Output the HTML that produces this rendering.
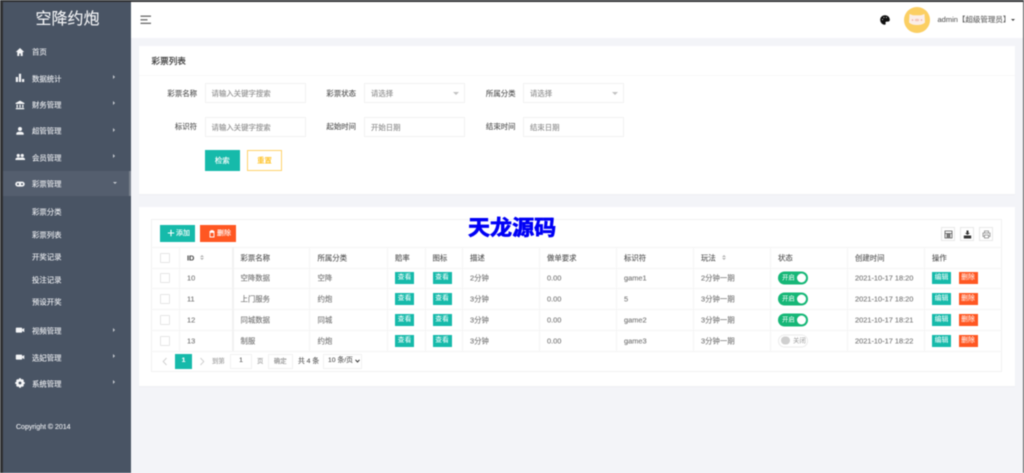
<!DOCTYPE html>
<html lang="zh"><head><meta charset="utf-8"><title>彩票列表</title>
<style>
*{box-sizing:border-box;margin:0;padding:0}
html,body{width:1024px;height:473px;overflow:hidden;background:#f3f4f8}
body{position:relative;font-family:"Liberation Sans","Noto Sans CJK SC",sans-serif;font-size:7.4px;color:#666}
.a{position:absolute;white-space:nowrap}
#page{position:absolute;left:0;top:0;width:1024px;height:473px;background:#f3f4f8;filter:blur(.4px);-webkit-text-stroke:.12px currentColor}
.side{position:absolute;left:3px;top:2px;width:128px;height:471px;background:#495464}
.m{position:absolute;left:32px;color:#e8eaee;line-height:12px;font-size:7.4px;transform:translateY(-5.5px)}
.ar{position:absolute;left:113px;width:0;height:0;border-left:2.5px solid #c5c9d0;border-top:2px solid transparent;border-bottom:2px solid transparent;transform:translateY(-2px)}
.ic{position:absolute;left:14px;width:10px;height:10px;transform:translateY(-5px)}
.card{position:absolute;left:139px;width:876px;background:#fff}
.lb{position:absolute;text-align:right;width:50px;color:#555;line-height:12px}
.ip{position:absolute;width:101px;height:20px;border:1px solid #f2f2f2;background:#fff;color:#8f8f8f;line-height:19px;padding-left:6px}
.tri{position:absolute;right:5px;top:8px;width:0;height:0;border-left:3px solid transparent;border-right:3px solid transparent;border-top:3.5px solid #c2c2c2}
.tb{position:absolute;left:151px;top:219px;width:851px;height:153px;border:1px solid #f2f2f2;background:#fff}
.hl{position:absolute;left:151px;width:851px;height:1px;background:#f4f4f4}
.vl{position:absolute;top:247px;width:1px;height:104px;background:#f4f4f4}
.t{position:absolute;line-height:12px;transform:translateY(-5.5px);color:#777}
.h{color:#555}
.cb{position:absolute;left:160px;width:10px;height:10px;border:1px solid #e6e6e6;background:#fff;border-radius:1px;transform:translateY(-5px)}
.b{position:absolute;width:19px;height:12px;line-height:12px;text-align:center;color:#fff;font-size:6.9px;background:#16baaa;transform:translateY(-6px);-webkit-text-stroke:0}
.r{background:#ff5722}
.sw{position:absolute;left:778px;width:30px;height:13px;border-radius:7px;background:#16b777;color:#fff;font-size:6.4px;line-height:13px;padding-left:4px;transform:translateY(-6.5px);-webkit-text-stroke:0}
.sw i{position:absolute;right:2px;top:2px;width:9px;height:9px;border-radius:50%;background:#fff}
.off{background:#fff;border:1px solid #ececec;color:#999;padding-left:14px;line-height:11px}
.off i{left:2px;right:auto;top:1px;background:#cfcfcf;width:8.5px;height:8.5px}
.sort{position:absolute;width:0;height:0;border-left:2.5px solid transparent;border-right:2.5px solid transparent}
.tool{position:absolute;top:227px;width:14px;height:14px;border:1px solid #e8e8e8;background:#fff}
</style></head><body><div id="page">
<div class="a" style="left:0;top:0;width:1024px;height:2px;background:#303133"></div>
<div class="a" style="left:0;top:0;width:3px;height:473px;background:#303133"></div>
<div class="a" style="left:1023px;top:0;width:1px;height:473px;background:#555"></div>

<div class="side"></div>
<div class="a" style="left:35.500px;top:8px;font-size:16px;line-height:24px;color:#f2f3f5">空降约炮</div>

<div class="a" style="left:3px;top:171px;width:128px;height:25px;background:#545e6e"></div>
<div class="a" style="left:129px;top:171px;width:2px;height:25px;background:#79818d"></div>

<svg class="ic" style="top:52px;left:14.500px" viewBox="0 0 10 10"><path d="M5 1 .8 5h1.500v4h2V6.500h1.400V9h2V5h1.500z" fill="#f4f5f7"/></svg>
<svg class="ic" style="top:78px;left:14.500px" viewBox="0 0 10 10"><path d="M.8 4h2.200v5H.8zM3.900 .8h2.200V9H3.900zM7 6h2.200v3H7z" fill="#f4f5f7"/></svg>
<svg class="ic" style="top:105px;left:14.500px" viewBox="0 0 10 10"><path d="M5 .6 .6 3v1h8.800V3zM1.500 4.600h1.300v3H1.500zM4.350 4.600h1.300v3H4.350zM7.200 4.600h1.300v3H7.200zM.8 8h8.400v1.300H.8z" fill="#f4f5f7"/></svg>
<svg class="ic" style="top:131px;left:14.500px" viewBox="0 0 10 10"><circle cx="5" cy="3" r="2" fill="#f4f5f7"/><path d="M1.300 8.800V7.200C2 6 3.500 5.800 5 5.800s3 .2 3.700 1.400v1.600z" fill="#f4f5f7"/></svg>
<svg class="ic" style="top:157px;left:14.500px;width:10.500px" viewBox="0 0 10 10"><circle cx="3" cy="3.500" r="1.600" fill="#f4f5f7"/><circle cx="7" cy="3.500" r="1.600" fill="#f4f5f7"/><path d="M.2 8V6.800C.8 5.700 2 5.500 3 5.500s2 .2 2 .2.9-.2 2-.2 2.200.2 2.800 1.300V8z" fill="#f4f5f7"/></svg>
<svg class="ic" style="top:183.500px;left:14.500px" viewBox="0 0 10 10"><rect x=".3" y="2.600" width="9.400" height="5" rx="2.500" fill="#f4f5f7"/><circle cx="3" cy="5.100" r="1" fill="#545e6e"/><circle cx="7" cy="5.100" r="1" fill="#545e6e"/></svg>
<svg class="ic" style="top:330px;left:14.500px" viewBox="0 0 10 10"><rect x=".8" y="2.600" width="6.400" height="5" rx=".8" fill="#f4f5f7"/><path d="M7.200 4.300 9.300 3.100v4L7.200 5.900z" fill="#f4f5f7"/></svg>
<svg class="ic" style="top:357px;left:14.500px" viewBox="0 0 10 10"><rect x=".8" y="2.600" width="6.400" height="5" rx=".8" fill="#f4f5f7"/><path d="M7.200 4.300 9.300 3.100v4L7.200 5.900z" fill="#f4f5f7"/></svg>
<svg class="ic" style="top:383px;left:14.500px" viewBox="0 0 10 10"><circle cx="5" cy="5" r="2.700" fill="none" stroke="#f4f5f7" stroke-width="2.600"/><path d="M4 .3h2v2H4zM4 7.700h2v2H4zM.3 4h2v2h-2zM7.700 4h2v2h-2zM1 2.500 2.500 1l1.200 1.200-1.500 1.500zM6.300 7.800l1.500-1.500L9 7.500 7.500 9zM1 7.500 2.500 9l1.200-1.200-1.500-1.500zM6.300 2.200l1.500 1.500L9 2.500 7.500 1z" fill="#f4f5f7"/></svg>

<div class="m" style="top:52px">首页</div>
<div class="m" style="top:78.500px">数据统计</div><div class="ar" style="top:77px"></div>
<div class="m" style="top:105px">财务管理</div><div class="ar" style="top:103px"></div>
<div class="m" style="top:131px">超管管理</div><div class="ar" style="top:129.500px"></div>
<div class="m" style="top:157.500px">会员管理</div><div class="ar" style="top:156px"></div>
<div class="m" style="top:183.500px">彩票管理</div>
<div class="a" style="left:112.500px;top:182px;border-top:2.500px solid #c5c9d0;border-left:2px solid transparent;border-right:2px solid transparent"></div>
<div class="m" style="top:212px">彩票分类</div>
<div class="m" style="top:234.500px">彩票列表</div>
<div class="m" style="top:257px">开奖记录</div>
<div class="m" style="top:280px">投注记录</div>
<div class="m" style="top:302px">预设开奖</div>
<div class="m" style="top:331px">视频管理</div><div class="ar" style="top:329.500px"></div>
<div class="m" style="top:357.500px">选妃管理</div><div class="ar" style="top:356px"></div>
<div class="m" style="top:383.500px">系统管理</div><div class="ar" style="top:382px"></div>
<div class="a" style="left:16px;top:422px;line-height:12px;color:#e4e6ea;font-size:7px">Copyright © 2014</div>

<!-- header -->
<div class="a" style="left:131px;top:2px;width:892px;height:36px;background:#fff"></div>
<svg class="a" style="left:140px;top:15px" width="12" height="10" viewBox="0 0 12 10"><path d="M.5 1.200h10.500M.5 4.800h7M.5 8.300h10.500" stroke="#555" stroke-width="1.100" fill="none"/></svg>
<svg class="a" style="left:880px;top:15px" width="10" height="10" viewBox="0 0 10 10"><path d="M5 .3C2.200.3.200 2.300.200 4.900S2.300 9.700 4.600 9.700c1 0 1.300-.7 1-1.400-.4-.9.100-1.700 1.100-1.700h1.500C9.200 6.600 9.800 5.800 9.800 4.800 9.800 2.200 7.600.3 5 .3z" fill="#111"/><circle cx="2.500" cy="4.600" r=".5" fill="#fff"/><circle cx="3.900" cy="2.500" r=".5" fill="#fff"/><circle cx="6.400" cy="2.500" r=".5" fill="#fff"/></svg>
<div class="a" style="left:904px;top:7px;width:26px;height:26px;border-radius:50%;background:#fbcf63"></div>
<svg class="a" style="left:908px;top:12px" width="18" height="14" viewBox="0 0 18 14"><path d="M1.500 2 5 3.200h8L16.500 2l.5 8.500C15 12.500 12 13 9 13s-6-.5-8-2.500z" fill="#fbeee8"/><ellipse cx="9" cy="8" rx="2.200" ry="1.300" fill="#f3c7bc"/><circle cx="4.500" cy="8" r=".8" fill="#eea89e"/><circle cx="13.500" cy="8" r=".8" fill="#eea89e"/></svg>
<div class="a" style="left:937.500px;top:14px;line-height:12px;color:#666;font-size:7.500px">admin【超级管理员】</div>
<div class="a" style="left:1011px;top:19px;border-top:2.500px solid #444;border-left:2px solid transparent;border-right:2px solid transparent"></div>

<!-- card 1 -->
<div class="card" style="top:46px;height:148px;box-shadow:0 1px 1px #eef0f3"></div>
<div class="a" style="left:139px;top:75px;width:876px;height:1px;background:#f8f8f8"></div>
<div class="a" style="left:151.500px;top:54px;line-height:14px;font-size:8.600px;color:#444;-webkit-text-stroke:.25px #444">彩票列表</div>

<div class="lb" style="left:147px;top:87.500px">彩票名称</div>
<div class="ip" style="left:204.500px;top:83px">请输入关键字搜索</div>
<div class="lb" style="left:306px;top:87.500px">彩票状态</div>
<div class="ip" style="left:364px;top:83px">请选择<span class="tri"></span></div>
<div class="lb" style="left:465.500px;top:87.500px">所属分类</div>
<div class="ip" style="left:523px;top:83px">请选择<span class="tri"></span></div>
<div class="lb" style="left:147px;top:121px">标识符</div>
<div class="ip" style="left:204.500px;top:117px">请输入关键字搜索</div>
<div class="lb" style="left:306px;top:121px">起始时间</div>
<div class="ip" style="left:364px;top:117px">开始日期</div>
<div class="lb" style="left:465.500px;top:121px">结束时间</div>
<div class="ip" style="left:523px;top:117px">结束日期</div>
<div class="a" style="left:204.500px;top:150px;width:35.500px;height:21px;background:#16baaa;color:#fff;text-align:center;line-height:21px">检索</div>
<div class="a" style="left:247px;top:150px;width:35px;height:21px;border:1px solid #ffd36b;background:#fff;color:#ffb800;text-align:center;line-height:19px">重置</div>

<!-- card 2 -->
<div class="card" style="top:207px;height:179px;box-shadow:0 1px 1px #eef0f3"></div>
<div class="tb"></div>
<div class="a" style="left:160px;top:225px;width:35px;height:16.500px;background:#16baaa;color:#fff;line-height:17.500px;font-size:7px;padding-left:16px">添加</div>
<svg class="a" style="left:167px;top:229px" width="8" height="8" viewBox="0 0 8 8"><path d="M4 .8v6.400M.8 4h6.400" stroke="#fff" stroke-width="1.100"/></svg>
<div class="a" style="left:200px;top:225px;width:35.500px;height:16.500px;background:#ff5722;color:#fff;line-height:17.500px;font-size:7px;padding-left:17px">删除</div>
<svg class="a" style="left:208px;top:229.500px" width="8" height="8" viewBox="0 0 8 8"><path d="M1.500 1.500h5M3 1V.6h2V1M2 2.400h4V7H2z" stroke="#fff" stroke-width=".9" fill="none"/></svg>

<div class="tool" style="left:941px"></div><div class="tool" style="left:960px"></div><div class="tool" style="left:979px"></div>
<svg class="a" style="left:944px;top:230px" width="9" height="9" viewBox="0 0 9 9"><path d="M1 1h7v2.500H1zM1 3.500V8h2V3.500M4 3.500V8h1V3.500M6 3.500V8h2V3.500" stroke="#555" stroke-width=".8" fill="none"/></svg>
<svg class="a" style="left:963px;top:230px" width="9" height="9" viewBox="0 0 9 9"><path d="M3.500 0.500h2V3H7L4.500 5 2 3h1.500zM.8 5.500H8.200V8.500H.8z" fill="#333"/></svg>
<svg class="a" style="left:982px;top:230px" width="9" height="9" viewBox="0 0 9 9"><path d="M2.500 3V1h4v2M2.500 6.500H1V3h7v3.500H6.500M2.500 5h4v3h-4z" stroke="#888" stroke-width=".8" fill="none"/></svg>

<div class="hl" style="top:247px"></div><div class="hl" style="top:267.500px"></div><div class="hl" style="top:288px"></div><div class="hl" style="top:309px"></div><div class="hl" style="top:330px"></div><div class="hl" style="top:350.500px"></div>
<div class="vl" style="left:178.500px"></div>
<div class="vl" style="left:231.500px;width:2px;background:#f2f2f2"></div>
<div class="vl" style="left:309px"></div><div class="vl" style="left:386.500px"></div><div class="vl" style="left:424.500px"></div><div class="vl" style="left:462px"></div><div class="vl" style="left:538.500px"></div><div class="vl" style="left:615.500px"></div><div class="vl" style="left:692.500px"></div><div class="vl" style="left:769.500px"></div><div class="vl" style="left:846.500px"></div><div class="vl" style="left:923.500px"></div>

<!-- thead -->
<div class="cb" style="top:257.500px"></div>
<div class="t h" style="left:187px;top:257.500px;font-weight:bold">ID</div>
<div class="sort" style="left:200px;top:254.500px;border-bottom:2.500px solid #b2b2b2"></div><div class="sort" style="left:200px;top:258px;border-top:2.500px solid #b2b2b2"></div>
<div class="t h" style="left:240.500px;top:257.500px">彩票名称</div>
<div class="t h" style="left:317.500px;top:257.500px">所属分类</div>
<div class="t h" style="left:395px;top:257.500px">赔率</div>
<div class="t h" style="left:432.500px;top:257.500px">图标</div>
<div class="t h" style="left:470px;top:257.500px">描述</div>
<div class="t h" style="left:547px;top:257.500px">做单要求</div>
<div class="t h" style="left:624px;top:257.500px">标识符</div>
<div class="t h" style="left:701px;top:257.500px">玩法</div>
<div class="sort" style="left:722px;top:254.500px;border-bottom:2.500px solid #b2b2b2"></div><div class="sort" style="left:722px;top:258px;border-top:2.500px solid #b2b2b2"></div>
<div class="t h" style="left:778px;top:257.500px">状态</div>
<div class="t h" style="left:855px;top:257.500px">创建时间</div>
<div class="t h" style="left:932px;top:257.500px">操作</div>

<!-- row 1 -->
<div class="cb" style="top:278px"></div>
<div class="t" style="left:187px;top:278px">10</div><div class="t" style="left:240.500px;top:278px">空降数据</div><div class="t" style="left:317.500px;top:278px">空降</div>
<div class="b" style="left:395px;top:278px">查看</div><div class="b" style="left:432.500px;top:278px">查看</div>
<div class="t" style="left:470px;top:278px">2分钟</div><div class="t" style="left:547px;top:278px">0.00</div><div class="t" style="left:624px;top:278px">game1</div><div class="t" style="left:701px;top:278px">2分钟一期</div>
<div class="sw" style="top:278px">开启<i></i></div><div class="t" style="left:855px;top:278px">2021-10-17 18:20</div>
<div class="b" style="left:932px;top:278px">编辑</div><div class="b r" style="left:958.500px;top:278px">删除</div>
<!-- row 2 -->
<div class="cb" style="top:299px"></div>
<div class="t" style="left:187px;top:299px">11</div><div class="t" style="left:240.500px;top:299px">上门服务</div><div class="t" style="left:317.500px;top:299px">约炮</div>
<div class="b" style="left:395px;top:299px">查看</div><div class="b" style="left:432.500px;top:299px">查看</div>
<div class="t" style="left:470px;top:299px">3分钟</div><div class="t" style="left:547px;top:299px">0.00</div><div class="t" style="left:624px;top:299px">5</div><div class="t" style="left:701px;top:299px">3分钟一期</div>
<div class="sw" style="top:299px">开启<i></i></div><div class="t" style="left:855px;top:299px">2021-10-17 18:20</div>
<div class="b" style="left:932px;top:299px">编辑</div><div class="b r" style="left:958.500px;top:299px">删除</div>
<!-- row 3 -->
<div class="cb" style="top:320px"></div>
<div class="t" style="left:187px;top:320px">12</div><div class="t" style="left:240.500px;top:320px">同城数据</div><div class="t" style="left:317.500px;top:320px">同城</div>
<div class="b" style="left:395px;top:320px">查看</div><div class="b" style="left:432.500px;top:320px">查看</div>
<div class="t" style="left:470px;top:320px">3分钟</div><div class="t" style="left:547px;top:320px">0.00</div><div class="t" style="left:624px;top:320px">game2</div><div class="t" style="left:701px;top:320px">3分钟一期</div>
<div class="sw" style="top:320px">开启<i></i></div><div class="t" style="left:855px;top:320px">2021-10-17 18:21</div>
<div class="b" style="left:932px;top:320px">编辑</div><div class="b r" style="left:958.500px;top:320px">删除</div>
<!-- row 4 -->
<div class="cb" style="top:340.500px"></div>
<div class="t" style="left:187px;top:340.500px">13</div><div class="t" style="left:240.500px;top:340.500px">制服</div><div class="t" style="left:317.500px;top:340.500px">约炮</div>
<div class="b" style="left:395px;top:340.500px">查看</div><div class="b" style="left:432.500px;top:340.500px">查看</div>
<div class="t" style="left:470px;top:340.500px">3分钟</div><div class="t" style="left:547px;top:340.500px">0.00</div><div class="t" style="left:624px;top:340.500px">game3</div><div class="t" style="left:701px;top:340.500px">3分钟一期</div>
<div class="sw off" style="top:340.500px">关闭<i></i></div><div class="t" style="left:855px;top:340.500px">2021-10-17 18:22</div>
<div class="b" style="left:932px;top:340.500px">编辑</div><div class="b r" style="left:958.500px;top:340.500px">删除</div>

<!-- pagination -->
<svg class="a" style="left:162px;top:357px" width="6" height="9" viewBox="0 0 6 9"><path d="M4.500 1 1.200 4.500 4.500 8" stroke="#d2d2d2" fill="none"/></svg>
<div class="a" style="left:175px;top:354px;width:17px;height:14.500px;background:#16baaa;color:#fff;text-align:center;line-height:14.500px;font-weight:bold;font-size:6.800px">1</div>
<svg class="a" style="left:199px;top:357px" width="6" height="9" viewBox="0 0 6 9"><path d="M1.500 1 4.800 4.500 1.500 8" stroke="#d2d2d2" fill="none"/></svg>
<div class="a" style="left:212px;top:355.500px;line-height:12px;color:#a0a0a0;font-size:6.400px">到第</div>
<div class="a" style="left:230px;top:354px;width:22px;height:14.500px;border:1px solid #f2f2f2;text-align:center;line-height:12.500px;color:#555;font-size:6.800px">1</div>
<div class="a" style="left:257px;top:355.500px;line-height:12px;color:#a0a0a0;font-size:6.400px">页</div>
<div class="a" style="left:268px;top:354px;width:24.500px;height:14.500px;border:1px solid #f2f2f2;text-align:center;line-height:13.500px;color:#888;font-size:6.400px">确定</div>
<div class="a" style="left:298px;top:355.500px;line-height:12px;color:#555;font-size:6.800px">共 4 条</div>
<div class="a" style="left:323px;top:354px;width:39px;height:14.500px;border:1px solid #f2f2f2;line-height:12.500px;color:#555;padding-left:4px;font-size:6.800px">10 条/页</div>
<svg class="a" style="left:355px;top:359px" width="5" height="4" viewBox="0 0 5 4"><path d="M.5.800 2.500 3 4.500.800" stroke="#333" fill="none" stroke-width="1"/></svg>

<!-- watermark -->
<div class="a" style="left:468px;top:212px;font-size:21px;line-height:30px;font-weight:bold;color:#0000f5;-webkit-text-stroke:.7px #0000f5;font-family:'Noto Sans CJK SC',sans-serif;transform:scaleX(1.05);transform-origin:left center">天龙源码</div>
</div></body></html>
